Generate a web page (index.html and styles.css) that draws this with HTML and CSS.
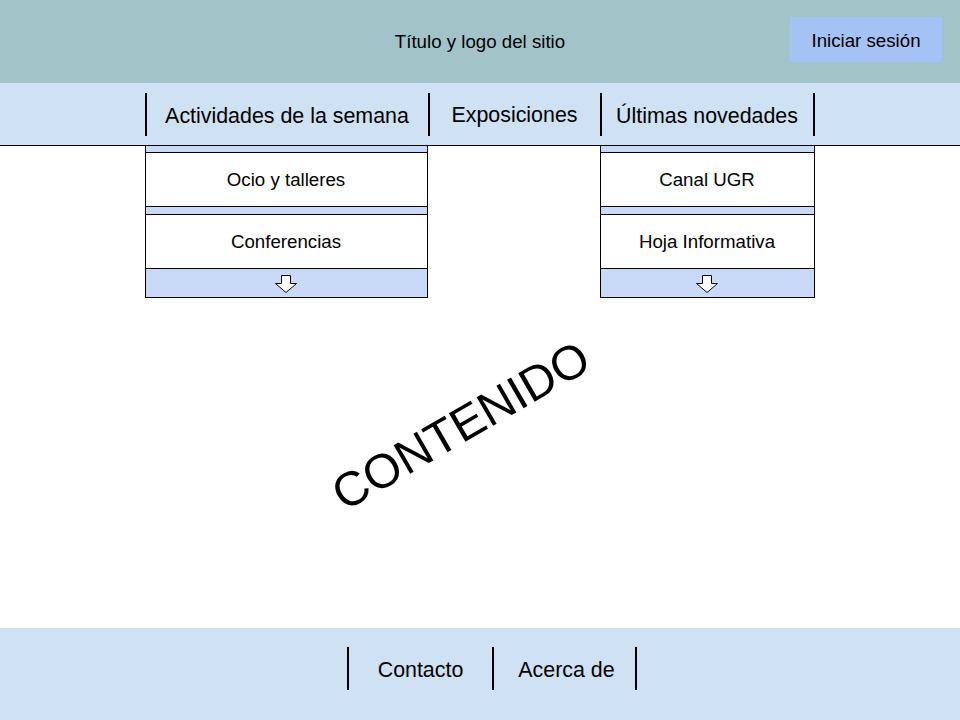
FILE: index.html
```html
<!DOCTYPE html>
<html lang="es">
<head>
<meta charset="utf-8">
<title>Maqueta</title>
<link rel="stylesheet" href="styles.css">
</head>
<body>
<div class="page">
  <header class="site-header">
    <div class="spacer"></div>
    <div class="site-title">Título y logo del sitio</div>
    <div class="login-wrap"><a class="login-btn">Iniciar sesión</a></div>
  </header>
  <nav class="main-nav">
    <div class="nav-item nav-wide">
      <span>Actividades de la semana</span>
      <div class="dropdown">
        <div class="strip"></div>
        <div class="dd-item">Ocio y talleres</div>
        <div class="strip strip-b"></div>
        <div class="dd-item dd-item-wide">Conferencias</div>
        <div class="arrow-strip">
          <svg width="24" height="20" viewBox="0 0 24 20"><path d="M7.5 1.5 H16.5 V9.5 H22.5 L12 18.5 L1.5 9.5 H7.5 Z" fill="#fff" stroke="#000" stroke-width="1"/></svg>
        </div>
      </div>
    </div>
    <div class="nav-item nav-mid"><span>Exposiciones</span></div>
    <div class="nav-item nav-last">
      <span>Últimas novedades</span>
      <div class="dropdown">
        <div class="strip"></div>
        <div class="dd-item">Canal UGR</div>
        <div class="strip strip-b"></div>
        <div class="dd-item">Hoja Informativa</div>
        <div class="arrow-strip">
          <svg width="24" height="20" viewBox="0 0 24 20"><path d="M7.5 1.5 H16.5 V9.5 H22.5 L12 18.5 L1.5 9.5 H7.5 Z" fill="#fff" stroke="#000" stroke-width="1"/></svg>
        </div>
      </div>
    </div>
  </nav>
  <main class="content">
    <div class="content-label">CONTENIDO</div>
  </main>
  <footer class="site-footer">
    <div class="foot-links">
      <a class="foot-item foot-first">Contacto</a>
      <a class="foot-item">Acerca de</a>
    </div>
  </footer>
</div>
</body>
</html>
```

FILE: styles.css
```css
* { box-sizing: border-box; }
html, body { margin: 0; padding: 0; }
body {
  width: 960px;
  height: 720px;
  overflow: hidden;
  font-family: "Liberation Sans", Arial, sans-serif;
  color: #000;
  background: #fff;
}
.page {
  display: flex;
  flex-direction: column;
  height: 720px;
}
.site-header {
  height: 83px;
  background: #a2c4c9;
  display: grid;
  grid-template-columns: 1fr auto 1fr;
  align-items: start;
}
.site-title {
  font-size: 18.7px;
  padding-top: 31px;
  line-height: 22px;
}
.login-wrap {
  display: flex;
  justify-content: flex-end;
  padding-top: 17px;
  padding-right: 18px;
}
.login-btn {
  width: 152px;
  height: 45px;
  background: #a4c2f4;
  font-size: 18.7px;
  display: flex;
  align-items: center;
  justify-content: center;
  padding-top: 2px;
}
.main-nav {
  height: 63px;
  background: #cfe2f3;
  border-bottom: 1px solid #000;
  display: flex;
  justify-content: center;
  align-items: flex-start;
  padding-top: 10px;
  padding-right: 1px;
  position: relative;
  z-index: 2;
}
.nav-item {
  position: relative;
  height: 43px;
  border-left: 2px solid #000;
  font-size: 21.4px;
  display: flex;
  align-items: center;
  justify-content: center;
}
.nav-item span { position: relative; top: 2px; }
.nav-wide { width: 283px; }
.nav-mid { width: 172px; }
.nav-mid span { top: 1px; }
.nav-last { width: 215px; border-right: 2px solid #000; }
.dropdown {
  position: absolute;
  top: 52px;
  left: -2px;
  right: 0;
  background: #fff;
  border: 1px solid #000;
  display: flex;
  flex-direction: column;
  font-size: 18.7px;
}
.nav-last .dropdown { right: -2px; }
.strip {
  height: 6px;
  background: #c9daf8;
}
.strip-b { height: 7px; }
.dd-item {
  height: 55px;
  border-top: 1px solid #000;
  border-bottom: 1px solid #000;
  background: #fff;
  display: flex;
  align-items: center;
  justify-content: center;
}
.dd-item-wide { margin-right: -1px; border-right: 1px solid #000; }
.arrow-strip {
  height: 28px;
  background: #c9daf8;
  display: flex;
  align-items: center;
  justify-content: center;
  padding-top: 2px;
}
.arrow-strip svg { display: block; }
.content {
  flex: 1;
  display: flex;
  align-items: center;
  justify-content: center;
  padding-top: 78px;
  padding-right: 38px;
}
.content-label {
  font-size: 48px;
  transform: rotate(-30deg);
  line-height: 1;
}
.site-footer {
  height: 92px;
  background: #cfe2f3;
  display: flex;
  justify-content: center;
  padding-top: 19px;
  padding-left: 24px;
}
.foot-links {
  display: flex;
  height: 43px;
  border-right: 2px solid #000;
}
.foot-item {
  border-left: 2px solid #000;
  font-size: 21.4px;
  display: flex;
  align-items: center;
  justify-content: center;
  padding-top: 3px;
}
.foot-first { width: 145px; }
.foot-item:not(.foot-first) { width: 143px; padding-left: 4px; }
```
